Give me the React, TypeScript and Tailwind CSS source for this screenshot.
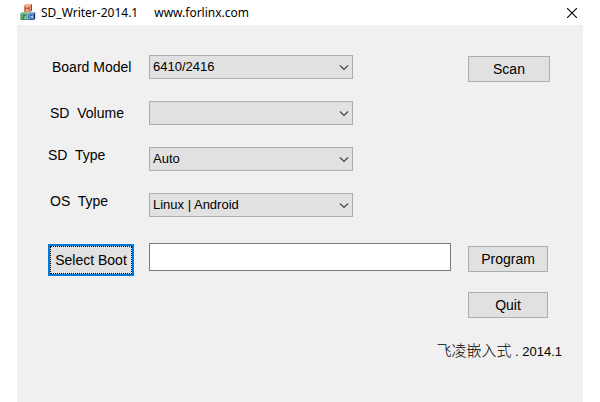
import { useState } from "react";
import type { ReactNode } from "react";

const fields = [
  { id: "board", label: "Board Model", labelClass: "pl-1 leading-6", options: ["6410/2416"] },
  { id: "volume", label: "SD  Volume", labelClass: "pl-0.5 leading-6", options: [""] },
  { id: "sd-type", label: "SD  Type", labelClass: "leading-4", options: ["Auto"] },
  { id: "os-type", label: "OS  Type", labelClass: "pl-0.5 leading-4", options: ["Linux | Android", "WinCE"] },
];

function AppIcon() {
  return (
    <svg className="w-4 h-4 mb-px" viewBox="0 0 16 16" fill="none">
      {/* Top block */}
      <path d="M4 1.5L5.5 0H12l-1.5 1.5z" fill="#f6b690" />
      <path d="M10.5 1.5L12 0v6.5L10.5 8z" fill="#9c4a28" />
      <rect x="4" y="1.5" width="6.5" height="6.5" fill="#dd8055" />
      <rect x="5" y="2.5" width="4.5" height="4.5" fill="#f5cdb5" />
      <path d="M5.7 6.6V3.3l1.6 1.6 1.6-1.6v3.3" stroke="#b3271e" />
      {/* Bottom left block */}
      <path d="M.5 9.5L2 8h6l-.5 1.5z" fill="#8cc79a" />
      <rect x=".5" y="9.5" width="7" height="6.5" fill="#2e8a54" />
      <rect x="1.7" y="10.6" width="4.6" height="4.4" fill="#a9dab5" />
      <path d="M3 15v-3.4h2.6M3 13.3h2" stroke="#17603a" />
      {/* Bottom right block */}
      <path d="M8 9.5L9 8h6.2l-1.2 1.5z" fill="#88aee0" />
      <path d="M14 9.5L15.2 8v6.5L14 16z" fill="#173a73" />
      <rect x="8" y="9.5" width="6" height="6.5" fill="#2c62ad" />
      <rect x="8.8" y="10.6" width="4.4" height="4.4" fill="#b5cff0" />
      <path d="M12.6 11.4H10v2.8h2.6" stroke="#1d4c95" />
    </svg>
  );
}

function PushButton({ children, wide }: { children: ReactNode; wide?: boolean }) {
  return (
    <button
      type="button"
      className={`${wide ? "w-[82px]" : "w-20"} h-[26px] border border-[#adadad] bg-[#e1e1e1] text-sm leading-6 hover:border-[#0078d7] hover:bg-[#e5f1fb]`}
    >
      {children}
    </button>
  );
}

export default function App() {
  const [path, setPath] = useState("");

  return (
    <div className="min-h-screen bg-white px-[17px] flex flex-col text-black font-['Liberation_Sans',Arial,sans-serif]">
      {/* Title bar */}
      <header className="h-[25px] flex items-center pl-[3px] pr-[5px]">
        <AppIcon />
        <h1 className="ml-[5px] flex-1 flex gap-4 text-xs leading-5 font-['Noto_Sans',sans-serif]">
          <span>SD_Writer-2014.1</span>
          <span>www.forlinx.com</span>
        </h1>
        <button type="button" aria-label="Close" className="p-px">
          <svg className="w-2.5 h-2.5" viewBox="0 0 10 10" fill="none" stroke="#000" strokeWidth="1.1">
            <path d="M0 0l10 10M10 0L0 10" />
          </svg>
        </button>
      </header>

      <main className="flex-1 bg-[#f0f0f0] pt-[30px] pb-10 pl-[31px] pr-[33px]">
        <div className="flex items-start justify-between">
          <div className="flex flex-col gap-[22px]">
            {fields.map((f) => (
              <div key={f.id} className="h-6 flex items-start">
                <label htmlFor={f.id} className={`w-[101px] whitespace-pre text-sm ${f.labelClass}`}>
                  {f.label}
                </label>
                <div className="relative">
                  <select
                    id={f.id}
                    className="block w-[204px] h-6 appearance-none border border-[#adadad] bg-[#e1e1e1] pl-[3px] pr-5 text-[13px]"
                  >
                    {f.options.map((o) => (
                      <option key={o}>{o}</option>
                    ))}
                  </select>
                  <svg className="absolute right-1 top-2 w-[10px] h-[8px] pointer-events-none" viewBox="0 0 10 8" fill="none" stroke="#444" strokeWidth="1.2">
                    <path d="M1 2.5l4 4 4-4" />
                  </svg>
                </div>
              </div>
            ))}
          </div>
          <div className="pt-px">
            <PushButton wide>Scan</PushButton>
          </div>
        </div>

        {/* Boot file row */}
        <div className="mt-[26px] flex items-start">
          <div className="w-[101px] pt-px">
            <button type="button" className="block w-[86px] h-8 border-2 border-[#0078d7] bg-[#e1e1e1] text-sm">
              <span className="flex h-full items-center justify-center border border-dotted border-black">Select Boot</span>
            </button>
          </div>
          <input
            type="text"
            aria-label="Boot file"
            value={path}
            onChange={(e) => setPath(e.target.value)}
            className="flex-1 min-w-0 h-7 border border-[#7a7a7a] bg-white px-1 text-[13px] outline-none"
          />
          <div className="w-[99px] pl-[17px] pt-[3px] flex flex-col gap-5">
            <PushButton>Program</PushButton>
            <PushButton>Quit</PushButton>
          </div>
        </div>

        <p className="mt-[22px] -mr-3 text-right text-[13px] leading-5">
          <span className="text-[15px] font-light font-['Noto_Sans_CJK_SC',sans-serif]">飞凌嵌入式</span> . 2014.1
        </p>
      </main>
    </div>
  );
}
